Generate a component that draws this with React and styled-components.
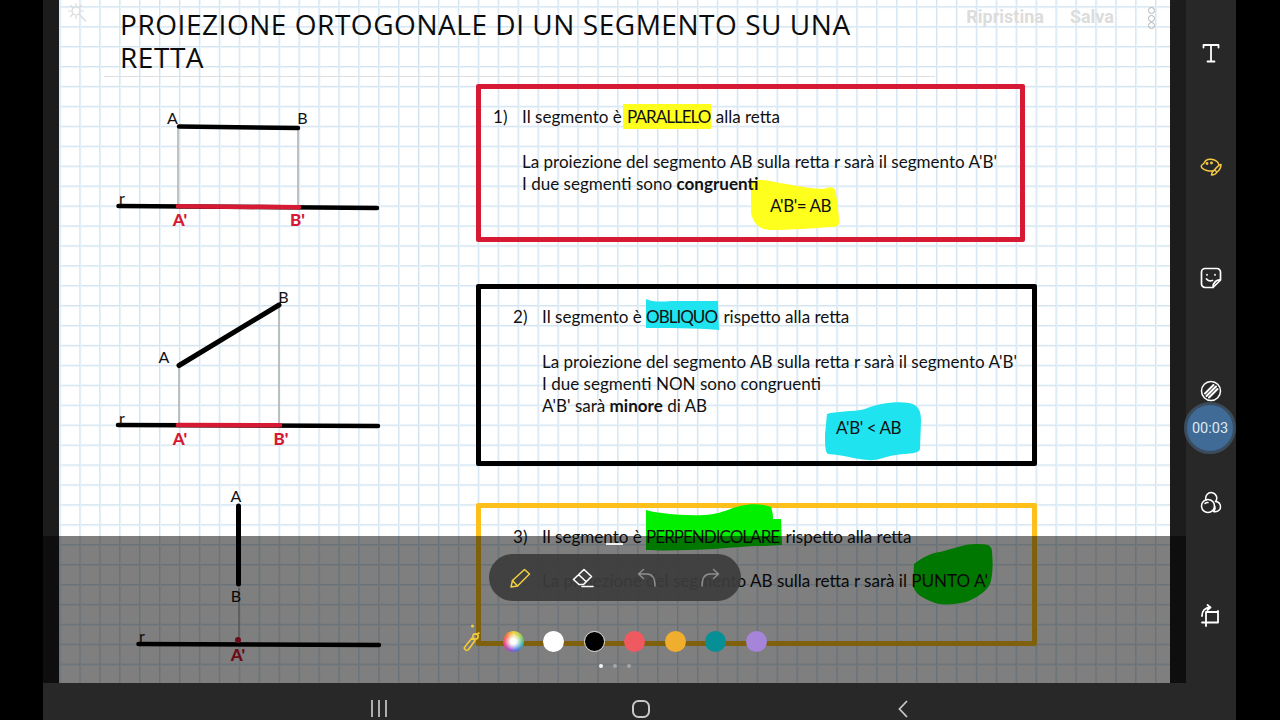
import React from "react";
import styled, { createGlobalStyle } from "styled-components";

const Global = createGlobalStyle`
  html, body { margin: 0; padding: 0; background: #000; }
  body { width: 1280px; height: 720px; overflow: hidden; }
`;

const Page = styled.div`
  width: 1280px;
  height: 720px;
  padding-left: 43px;
  box-sizing: border-box;
  background: #000;
  overflow: hidden;
`;

const Device = styled.div`
  position: relative;
  width: 1193px;
  height: 720px;
  display: grid;
  grid-template-columns: 16px 1111px 16px 50px;
  grid-template-rows: 683px 37px;
`;

const Strip = styled.div`
  background: #1c1c1c;
`;

const Paper = styled.main`
  position: relative;
  overflow: hidden;
  background-color: #fff;
  background-image:
    linear-gradient(to right, #d2e4f1 1px, #eaf3f9 1px, #eaf3f9 1.6px, transparent 1.6px),
    linear-gradient(to bottom, #d2e4f1 1px, #eaf3f9 1px, #eaf3f9 1.6px, transparent 1.6px);
  background-size: 19.93px 19.93px;
  background-position: 0.4px 6.2px;
  font-family: Lato, "Liberation Sans", sans-serif;
  color: #111;
`;

const Header = styled.header`
  display: flex;
  align-items: flex-start;
  height: 76px;
  padding: 0 15px 0 8px;
  box-sizing: border-box;
`;

const Wand = styled.svg`
  width: 22px;
  height: 24px;
  margin: 1px 31px 0 0;
  flex: none;
`;

const Title = styled.h1`
  width: 750px;
  margin: 8px 0 0;
  font: 400 28px/33px "Open Sans", sans-serif;
  letter-spacing: 0.54px;
  color: #0c0c0c;
`;

const Actions = styled.div`
  margin-left: auto;
  display: flex;
  align-items: flex-start;
  gap: 26px;
  padding-top: 8px;
  font: 700 18px/18px Roboto, sans-serif;
  color: #dcdcdc;
`;

const Dots = styled.div`
  display: flex;
  flex-direction: column;
  gap: 0.5px;
  margin: -1px 0 0 8px;
`;

const Dot = styled.span`
  width: 5px;
  height: 5px;
  border: 1px solid #b4b4b4;
  border-radius: 50%;
`;

const Rule = styled.hr`
  width: 831px;
  height: 1px;
  margin: 0 0 0 45px;
  border: 0;
  background: #dfdfdf;
`;

const Section = styled.section`
  display: grid;
  grid-template-columns: 417px 1fr;
  margin-top: ${(p) => p.$gap}px;
`;

const Diagram = styled.svg`
  display: block;
  width: 417px;
  height: 100%;
  overflow: visible;
  font-family: Lato, sans-serif;
  font-size: 16px;
`;

const Box = styled.div`
  position: relative;
  box-sizing: border-box;
  width: ${(p) => p.$width}px;
  height: ${(p) => p.$height}px;
  border: 5px solid ${(p) => p.$color};
  border-radius: 2px;
  padding: ${(p) => p.$top}px 0 0 ${(p) => p.$left}px;
  font-size: 17.05px;
  line-height: 22.3px;
`;

const Line = styled.div`
  position: relative;
  display: flex;
  height: 22.3px;
  white-space: pre;
  margin-bottom: ${(p) => (p.$spaced ? 22.3 : 0)}px;
  padding-left: ${(p) => p.$indent || 0}px;
`;

const Num = styled.span`
  width: 29px;
  flex: none;
`;

const Caps = styled.span`
  letter-spacing: -1px;
  margin-right: 2px;
`;

const Formula = styled.span`
  letter-spacing: -0.45px;
`;

const Mark = styled(Caps)`
  background: #ffff1e;
  padding: 2px 1px 2px 4px;
  margin: 0 0 0 -3px;
`;

const Blob = styled.svg`
  position: absolute;
  left: ${(p) => p.$x}px;
  top: ${(p) => p.$y}px;
  overflow: visible;
`;

const SideBar = styled.aside`
  position: relative;
  background: #282828;
  display: flex;
  flex-direction: column;
  align-items: center;
  padding-top: 41px;
  gap: 88.6px;
  svg { display: block; }
`;

const Timer = styled.div`
  position: absolute;
  left: -2px;
  top: 402px;
  width: 52px;
  height: 52px;
  box-sizing: border-box;
  border: 3px solid #3b4c5d;
  border-radius: 50%;
  background: #3f6b96;
  color: #dfe8f0;
  font: 400 14.5px/48px Roboto, sans-serif;
  text-align: center;
`;

const Nav = styled.nav`
  grid-column: 1 / -1;
  background: #282828;
  display: flex;
  justify-content: center;
  align-items: flex-start;
  gap: 238px;
  padding: 13px 0 0 3px;
`;

const Dim = styled.div`
  position: absolute;
  left: 0;
  top: 536px;
  width: 1143px;
  height: 147px;
  background: rgba(0, 0, 0, 0.5);
  display: flex;
  flex-direction: column;
  align-items: center;
`;

const Handle = styled.div`
  width: 17px;
  height: 2px;
  margin-top: 7px;
  background: #f2f2f2;
`;

const Pill = styled.div`
  width: 252px;
  height: 47px;
  margin-top: 9px;
  box-sizing: border-box;
  padding-left: 19px;
  border-radius: 24px;
  background: rgba(60, 60, 60, 0.93);
  display: flex;
  align-items: center;
  gap: 39.5px;
`;

const Swatches = styled.div`
  display: flex;
  align-items: center;
  gap: 19.6px;
  margin-top: 30px;
  svg { display: block; overflow: visible; }
`;

const Swatch = styled.span`
  width: 21px;
  height: 21px;
  box-sizing: border-box;
  border-radius: 50%;
  background: ${(p) => p.$color};
  border: ${(p) => (p.$ring ? "1px solid #e8e8e8" : "0")};
`;

const Wheel = styled(Swatch)`
  background:
    radial-gradient(circle, #fff 0 18%, rgba(255, 255, 255, 0) 62%),
    conic-gradient(#f4d03a, #9fce4c, #45b8a8, #4a78d8, #a04fc8, #e84a88, #f0703a, #f4d03a);
`;

const Pager = styled.div`
  display: flex;
  gap: 10px;
  margin-top: 12px;
`;

const PagerDot = styled.span`
  width: 4px;
  height: 4px;
  border-radius: 50%;
  background: ${(p) => (p.$on ? "#f4f4f4" : "#a6a6a6")};
`;

const RED = "#d61a33";

const Label = ({ x, y, red, children }) => (
  <text x={x} y={y} textAnchor="middle" fill={red ? RED : "#111"} fontWeight={red ? 900 : 400} fontSize={red ? 17 : 16}>
    {children}
  </text>
);

const Thin = ({ x1, y1, x2, y2 }) => <line x1={x1} y1={y1} x2={x2} y2={y2} stroke="#a9a9a9" strokeWidth="1.4" />;
const Thick = ({ x1, y1, x2, y2, w = 4.5, color = "#000" }) => (
  <line x1={x1} y1={y1} x2={x2} y2={y2} stroke={color} strokeWidth={w} strokeLinecap="round" />
);

// icons
const icon = { fill: "none", strokeLinecap: "round", strokeLinejoin: "round" };

const TextIcon = () => (
  <svg width="24" height="24" viewBox="0 0 24 24" {...icon} stroke="#fff" strokeWidth="1.8">
    <path d="M4.5 6.5V4h15v2.5M12 4v16M8.5 20.5h7" />
  </svg>
);

const PaletteIcon = () => (
  <svg width="24" height="24" viewBox="0 0 24 24" {...icon} stroke="#f6c945" strokeWidth="1.5">
    <path d="M14 17c-4 .5-9-.8-11-3-1.500-1.700-.5-3.200.8-3.600 1.400-.4 1.300-2.400 3-3.800C9.500 4.500 15 5 18 7.500c1 .8 1.500 1.800 1.600 2.800" />
    <circle cx="8" cy="9.500" r=".7" />
    <circle cx="12.500" cy="9" r=".7" />
    <path d="M22 10.500c-1.500.2-5 3-6.500 5.500l2.500 2c2-1.500 4-4.500 4-7.500zM15.500 16c-1.500.5-2.500 2-3 5 2.500 0 4.500-1 5.500-3" />
  </svg>
);

const StickerIcon = () => (
  <svg width="24" height="24" viewBox="0 0 24 24" {...icon} stroke="#fff" strokeWidth="1.7">
    <path d="M14 21.500H6a3.500 3.500 0 0 1-3.500-3.500V6A3.500 3.500 0 0 1 6 2.500h12A3.500 3.500 0 0 1 21.500 6v8c-3.500-.5-7.500 2-7.500 7.500zM14 21.500l7.500-7.500" />
    <path d="M8 8.500v.5M16 8.500v.5M7.500 13c1.500 1.800 4 2.200 6 1.500" />
  </svg>
);

const StripeIcon = () => (
  <svg width="24" height="24" viewBox="0 0 24 24">
    <circle cx="12" cy="12" r="9.500" fill="none" stroke="#fff" strokeWidth="1.500" />
    <path d="M6 14.500 14.500 6M7.500 17 17 7.500M10 18.500 18.500 10" stroke="#fff" strokeWidth="2" strokeLinecap="round" />
  </svg>
);

const CirclesIcon = () => (
  <svg width="24" height="24" viewBox="0 0 24 24" {...icon} stroke="#fff" strokeWidth="1.500">
    <circle cx="9" cy="15" r="6.500" />
    <path d="M7 8.800a5.500 5.500 0 1 1 9.500 1.700M15.500 15a4.800 4.800 0 0 1-1 5.500c3 .8 7-.8 7-4.500 0-3-2.200-5.200-5-5.500" />
    <path d="M6 12.500c.8-.8 1.800-1 3-.9" />
  </svg>
);

const CropIcon = () => (
  <svg width="24" height="24" viewBox="0 0 24 24" {...icon} stroke="#fff" strokeWidth="1.800">
    <path d="M7 8v14M3 18.500h16V8H7M19 8v-1" />
    <path d="M3 12C3 7 6 3.500 11 3.500M8.500 1l3 2.500-3 2.500" />
  </svg>
);

const SparkleIcon = () => (
  <Wand viewBox="0 0 22 24" {...icon} stroke="#dadada" strokeWidth="1.200">
    <circle cx="9" cy="10" r="4" />
    <path d="M9 2.500v2.500M9 15v2.500M1.500 10H4M14 10h2.500M3.500 4.500l2 2M12.500 13.500l6 6.500M14.500 4.500l-2 2M3.500 15.500l2-2" />
  </Wand>
);

const PencilIcon = () => (
  <svg width="24" height="24" viewBox="0 0 24 24" {...icon} stroke="#f3d03f" strokeWidth="1.500">
    <path d="M3 21l1.500-6.500L16.500 3.500 21.500 8 9.500 20z" />
    <path d="M4.500 14.500l5 5.500" />
  </svg>
);

const EraserIcon = () => (
  <svg width="24" height="24" viewBox="0 0 24 24" {...icon} stroke="#fff" strokeWidth="1.600">
    <path d="M2.500 13.500 13 3.500l7.500 7-8 8H8zM7.500 8.500l7.500 7" />
    <path d="M11 20.500h11" />
  </svg>
);

const UndoIcon = ({ flip }) => (
  <svg width="24" height="24" viewBox="0 0 24 24" {...icon} stroke="#8e8e8e" strokeWidth="1.500"
    style={flip ? { transform: "scaleX(-1)" } : undefined}>
    <path d="M8.500 3.500 3.500 8l5 4.500M3.500 8H12c5 0 8 4 8 12" />
  </svg>
);

const PenIcon = () => (
  <svg width="21" height="21" viewBox="0 0 21 21" {...icon} stroke="#f3cb3a" strokeWidth="1.600">
    <circle cx="10.500" cy="-5" r="1.600" fill="#f3cb3a" stroke="none" />
    <path d="M3 18.500c-1 -1-.9-1.800-.3-2.500L10 7l3 2.500-6.500 9c-.9 1-2.300 1.200-3.500 0z" />
    <circle cx="13.500" cy="5.500" r="2.600" />
    <path d="M15 3l2-1" />
  </svg>
);

export default function App() {
  return (
    <Page>
      <Global />
      <Device>
        <Strip />
        <Paper>
          <Header>
            <SparkleIcon />
            <Title>PROIEZIONE ORTOGONALE DI UN SEGMENTO SU UNA RETTA</Title>
            <Actions>
              <span>Ripristina</span>
              <span>Salva</span>
              <Dots><Dot /><Dot /><Dot /></Dots>
            </Actions>
          </Header>
          <Rule />

          <Section $gap={7}>
            <Diagram viewBox="59 84 417 158">
              <Thin x1="178" y1="127" x2="178" y2="205" />
              <Thin x1="298" y1="128" x2="298" y2="206" />
              <Thick x1="179" y1="126.500" x2="298" y2="128" />
              <Thick x1="118.500" y1="206" x2="377" y2="208" />
              <Thick x1="178" y1="206.300" x2="299" y2="207.200" color={RED} />
              <Label x="172.500" y="123.500">A</Label>
              <Label x="302.500" y="123.500">B</Label>
              <Label x="122" y="203.500">r</Label>
              <Label x="180" y="225.500" red>A'</Label>
              <Label x="297.500" y="225.500" red>B'</Label>
            </Diagram>
            <Box $width={549} $height={158} $color={RED} $top={17} $left={12}>
              <Blob $x={269} $y={90} width="90" height="51" viewBox="0 0 90 51">
                <path d="M1 4C6-1 16 1 30 4c18 3 34 6 44 6 3-2 10-3 11 1 3 12 4 26 4 32 0 5-4 5-10 5-14 1-38 3-60 3C8 50 3 43 1 34z" fill="#ffff1e" />
              </Blob>
              <Line $spaced><Num>1)</Num><span>Il segmento è <Mark>PARALLELO</Mark> alla retta</span></Line>
              <Line $indent={29}>La proiezione del segmento AB sulla retta r sarà il segmento A'B'</Line>
              <Line $indent={29}><span>I due segmenti sono <b>congruenti</b></span></Line>
              <Line $indent={277}><Formula>A'B'= AB</Formula></Line>
            </Box>
          </Section>

          <Section $gap={42}>
            <Diagram viewBox="59 284 417 182">
              <Thin x1="179" y1="366" x2="179" y2="424" />
              <Thin x1="279" y1="305" x2="279" y2="424" />
              <Thick x1="179" y1="365.500" x2="279" y2="305" w={5} />
              <Thick x1="118" y1="425" x2="378" y2="426" />
              <Thick x1="178" y1="425" x2="280" y2="425.300" color={RED} />
              <Label x="164" y="362.500">A</Label>
              <Label x="283.500" y="302.500">B</Label>
              <Label x="122" y="423.500">r</Label>
              <Label x="180" y="444.500" red>A'</Label>
              <Label x="281" y="444.500" red>B'</Label>
            </Diagram>
            <Box $width={561} $height={182} $color="#000" $top={17} $left={32}>
              <Blob $x={164} $y={9} width="74" height="31" viewBox="0 0 74 31">
                <path d="M1 1c6 3 14 3 26 2h46l1 29C50 30 20 30 1 30z" fill="#1fe3ee" />
              </Blob>
              <Blob $x={344} $y={113} width="96" height="59" viewBox="0 0 96 59">
                <path d="M2 12c8-3 26-2 38-5C52 2 70-1 84 1c10 2 12 8 12 18l-1 28c-1 5-10 4-24 6-10 1-18 6-28 5-14-1-24-5-40-6C0 50 0 42 0 32z" fill="#1fe3ee" />
              </Blob>
              <Line $spaced><Num>2)</Num><span>Il segmento è <Caps>OBLIQUO</Caps> rispetto alla retta</span></Line>
              <Line $indent={29}>La proiezione del segmento AB sulla retta r sarà il segmento A'B'</Line>
              <Line $indent={29}>I due segmenti NON sono congruenti</Line>
              <Line $indent={29}><span>A'B' sarà <b>minore</b> di AB</span></Line>
              <Line $indent={323}><Formula>A'B' &lt; AB</Formula></Line>
            </Box>
          </Section>

          <Section $gap={37}>
            <Diagram viewBox="59 503 417 143">
              <Thin x1="239" y1="588" x2="239" y2="640" />
              <Thick x1="238.500" y1="506" x2="238.500" y2="584" w={5} />
              <Thick x1="138.500" y1="644" x2="379" y2="645" />
              <circle cx="238" cy="640" r="3" fill={RED} />
              <Label x="236" y="501.500">A</Label>
              <Label x="236" y="601.500">B</Label>
              <Label x="142" y="642">r</Label>
              <Label x="238" y="660.500" red>A'</Label>
            </Diagram>
            <Box $width={561} $height={143} $color="#fdc01a" $top={17.5} $left={32}>
              <Blob $x={164} $y={-4} width="137" height="49" viewBox="0 0 137 49">
                <path d="M1 6c10 3 35 6 58 5 14 0 24-6 36-9 12-3 24-2 31 1 2 6 2 9 2 12l8 0 1 26-18 1c-20 0-34 2-50 3-22 1-48 2-68 1z" fill="#00f000" />
              </Blob>
              <Blob $x={432} $y={36} width="80" height="61" viewBox="0 0 80 61">
                <path d="M1 20c8-6 16-11 26-12 12-3 24-8 36-8 10 0 16 0 16 8 1 10 1 24-2 32-4 8-14 14-24 18-14 3-26 4-36-1C10 54 2 50 0 42z" fill="#00ee00" />
              </Blob>
              <Line $spaced><Num>3)</Num><span>Il segmento è <Caps>PERPENDICOLARE</Caps> rispetto alla retta</span></Line>
              <Line $indent={29}>La proiezione del segmento AB sulla retta r sarà il PUNTO A'</Line>
            </Box>
          </Section>
        </Paper>
        <Strip />
        <SideBar>
          <TextIcon />
          <PaletteIcon />
          <StickerIcon />
          <StripeIcon />
          <CirclesIcon />
          <CropIcon />
          <Timer>00:03</Timer>
        </SideBar>
        <Nav>
          <svg width="24" height="24" viewBox="0 0 24 24" stroke="#d0d0d0" strokeWidth="1.600">
            <path d="M5 4v17M12 4v17M19 4v17" />
          </svg>
          <svg width="24" height="24" viewBox="0 0 24 24" fill="none" stroke="#c8c8c8" strokeWidth="2">
            <rect x="4" y="5" width="16" height="16" rx="5.500" />
          </svg>
          <svg width="24" height="24" viewBox="0 0 24 24" fill="none" stroke="#c8c8c8" strokeWidth="1.800">
            <path d="M16 5l-7.500 8 7.500 8" />
          </svg>
        </Nav>
        <Dim>
          <Handle />
          <Pill>
            <PencilIcon />
            <EraserIcon />
            <UndoIcon />
            <UndoIcon flip />
          </Pill>
          <Swatches>
            <PenIcon />
            <Wheel />
            <Swatch $color="#fff" />
            <Swatch $color="#000" $ring />
            <Swatch $color="#ef5a60" />
            <Swatch $color="#f0ae2e" />
            <Swatch $color="#078f96" />
            <Swatch $color="#a684da" />
          </Swatches>
          <Pager>
            <PagerDot $on />
            <PagerDot />
            <PagerDot />
          </Pager>
        </Dim>
      </Device>
    </Page>
  );
}
